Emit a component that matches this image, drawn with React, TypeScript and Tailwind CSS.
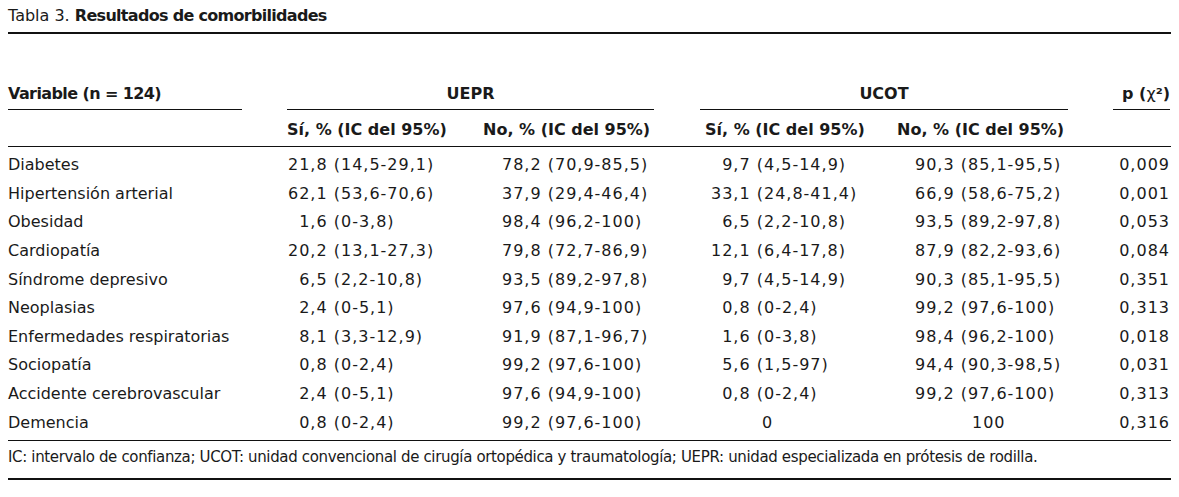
import React from "react";

type Row = {
  name: string;
  a: string;
  b: string;
  c: string;
  d: string;
  p: string;
};

const rows: Row[] = [
  { name: "Diabetes", a: "21,8 (14,5-29,1)", b: "78,2 (70,9-85,5)", c: "9,7 (4,5-14,9)", d: "90,3 (85,1-95,5)", p: "0,009" },
  { name: "Hipertensión arterial", a: "62,1 (53,6-70,6)", b: "37,9 (29,4-46,4)", c: "33,1 (24,8-41,4)", d: "66,9 (58,6-75,2)", p: "0,001" },
  { name: "Obesidad", a: "1,6 (0-3,8)", b: "98,4 (96,2-100)", c: "6,5 (2,2-10,8)", d: "93,5 (89,2-97,8)", p: "0,053" },
  { name: "Cardiopatía", a: "20,2 (13,1-27,3)", b: "79,8 (72,7-86,9)", c: "12,1 (6,4-17,8)", d: "87,9 (82,2-93,6)", p: "0,084" },
  { name: "Síndrome depresivo", a: "6,5 (2,2-10,8)", b: "93,5 (89,2-97,8)", c: "9,7 (4,5-14,9)", d: "90,3 (85,1-95,5)", p: "0,351" },
  { name: "Neoplasias", a: "2,4 (0-5,1)", b: "97,6 (94,9-100)", c: "0,8 (0-2,4)", d: "99,2 (97,6-100)", p: "0,313" },
  { name: "Enfermedades respiratorias", a: "8,1 (3,3-12,9)", b: "91,9 (87,1-96,7)", c: "1,6 (0-3,8)", d: "98,4 (96,2-100)", p: "0,018" },
  { name: "Sociopatía", a: "0,8 (0-2,4)", b: "99,2 (97,6-100)", c: "5,6 (1,5-97)", d: "94,4 (90,3-98,5)", p: "0,031" },
  { name: "Accidente cerebrovascular", a: "2,4 (0-5,1)", b: "97,6 (94,9-100)", c: "0,8 (0-2,4)", d: "99,2 (97,6-100)", p: "0,313" },
  { name: "Demencia", a: "0,8 (0-2,4)", b: "99,2 (97,6-100)", c: "0", d: "100", p: "0,316" },
];

const cols = "grid grid-cols-[234px_45px_196px_171px_46px_197px_171px_45px_57px]";

// pads single-digit values so the integer parts line up
function Num({ v }: { v: string }) {
  const single = /^\d,/.test(v);
  return (
    <span className="whitespace-pre tracking-[1px]">
      {single && <span className="invisible">0</span>}
      {v}
    </span>
  );
}

export default function App() {
  return (
    <div
      className="w-[1179px] h-[497px] bg-white text-[#1a1a1a] text-[16px] leading-none"
      style={{ fontFamily: '"DejaVu Sans", sans-serif' }}
    >
      <div className="mx-[8px] w-[1163px]">
        <div className="h-[34px] flex items-center border-b-2 border-[#111]">
          <span>Tabla 3.&nbsp;</span>
          <span className="font-bold tracking-[-0.7px]">Resultados de comorbilidades</span>
        </div>

        <div className="h-[44px]" />

        {/* header row 1 */}
        <div className={`${cols} h-[32px] items-stretch font-bold`}>
          <div className="flex items-center border-b border-[#111] tracking-[-0.6px]">Variable (n = 124)</div>
          <div />
          <div className="col-span-2 flex items-center justify-center border-b border-[#111]">UEPR</div>
          <div />
          <div className="col-span-2 flex items-center justify-center border-b border-[#111]">UCOT</div>
          <div />
          <div className="flex items-center justify-end border-b border-[#111]">
            <span>
              p (<span className="font-normal">χ</span>²)
            </span>
          </div>
        </div>

        {/* header row 2 */}
        <div className={`${cols} h-[37px] items-center pt-[3px] font-bold border-b border-[#111]`}>
          <div />
          <div />
          <div>Sí, % (IC del 95%)</div>
          <div>No, % (IC del 95%)</div>
          <div />
          <div className="pl-[5px]">Sí, % (IC del 95%)</div>
          <div>No, % (IC del 95%)</div>
          <div />
          <div />
        </div>

        <div className="pt-[4px] pb-[3px] border-b border-[#111]">
          {rows.map((r) => (
            <div key={r.name} className={`${cols} h-[28.6px] items-center`}>
              <div>{r.name}</div>
              <div />
              <div className="pl-[1px]">
                <Num v={r.a} />
              </div>
              <div className="pl-[19px]">
                <Num v={r.b} />
              </div>
              <div />
              {r.c === "0" ? (
                <div className="pl-[62px]">0</div>
              ) : (
                <div className="pl-[11px]">
                  <Num v={r.c} />
                </div>
              )}
              {r.d === "100" ? (
                <div className="pl-[75px] tracking-[1px]">100</div>
              ) : (
                <div className="pl-[18px]">
                  <Num v={r.d} />
                </div>
              )}
              <div />
              <div className="text-right tracking-[1px]">{r.p}</div>
            </div>
          ))}
        </div>

        <div className="h-[39px] flex items-center pb-[3px] border-b-2 border-[#111] text-[15px] tracking-[-0.35px]">
          IC: intervalo de confianza; UCOT: unidad convencional de cirugía ortopédica y traumatología; UEPR: unidad
          especializada en prótesis de rodilla.
        </div>
      </div>
    </div>
  );
}
